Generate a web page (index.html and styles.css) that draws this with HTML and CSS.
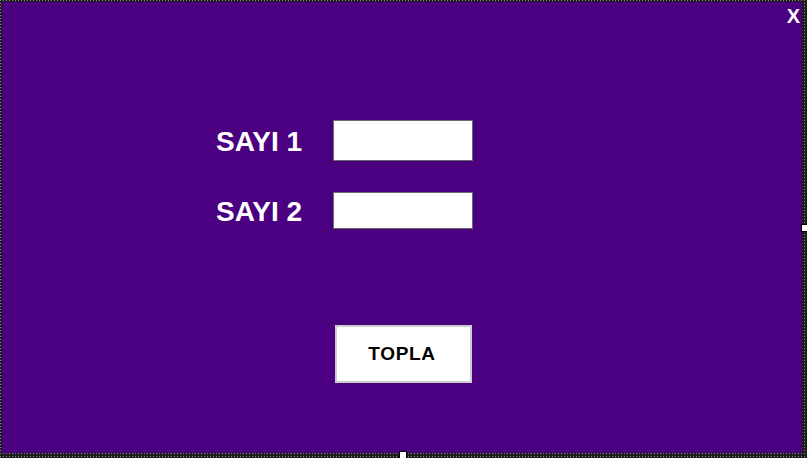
FILE: index.html
```html
<!DOCTYPE html>
<html lang="tr">
<head>
<meta charset="utf-8">
<title>Form</title>
<link rel="stylesheet" href="styles.css">
</head>
<body>
<div class="frame">
  <div class="form">
    <span class="close">X</span>
    <div class="fields">
      <label class="lbl">SAYI 1</label>
      <input class="box box1" type="text">
      <label class="lbl">SAYI 2</label>
      <input class="box box2" type="text">
    </div>
    <button class="btn" type="button">TOPLA</button>
  </div>
  <span class="handle handle-right"></span>
  <span class="handle handle-bottom"></span>
</div>
</body>
</html>
```
FILE: styles.css
```css
html, body {
  margin: 0;
  padding: 0;
  width: 807px;
  height: 458px;
  overflow: hidden;
}
body {
  font-family: "Liberation Sans", Arial, sans-serif;
}
.frame {
  position: relative;
  width: 807px;
  height: 458px;
  box-sizing: border-box;
  padding: 2px 5px 5px 2px;
  background: conic-gradient(from 270deg at 1px 1px, #8a8a8a 90deg, #1e1e1e 0) 0 0 / 3px 3px;
}
.form {
  position: relative;
  width: 800px;
  height: 451px;
  box-sizing: border-box;
  background: #4b0082;
  padding: 118px 0 0 213px;
}
.close {
  position: absolute;
  top: 3px;
  right: 2px;
  color: #fff;
  font-weight: bold;
  font-size: 20px;
  line-height: 22px;
}
.fields {
  display: grid;
  grid-template-columns: 118px 140px;
  grid-template-rows: 41px 37px;
  row-gap: 31px;
  align-items: center;
}
.lbl {
  color: #fff;
  font-weight: bold;
  font-size: 28px;
  line-height: 30px;
  padding: 2px 0 0 1px;
  white-space: nowrap;
}
.box {
  box-sizing: border-box;
  width: 140px;
  margin: 0;
  border: 1px solid #6b6b6b;
  background: #fff;
  outline: none;
  padding: 0 4px;
}
.box1 { height: 41px; }
.box2 { height: 37px; }
.btn {
  display: block;
  box-sizing: border-box;
  margin: 96px 0 0 120px;
  width: 137px;
  height: 58px;
  background: #fff;
  border: 2px solid #cdcdcd;
  padding: 0 3px 0 0;
  font-family: "Liberation Sans", Arial, sans-serif;
  font-weight: bold;
  font-size: 19px;
  letter-spacing: 0.7px;
  color: #000;
}
.handle {
  position: absolute;
  box-sizing: border-box;
  background: #fff;
  border: 1px solid #000;
}
.handle-right {
  left: 801px;
  top: 224px;
  width: 7px;
  height: 8px;
}
.handle-bottom {
  left: 399px;
  top: 451px;
  width: 8px;
  height: 8px;
}
```
